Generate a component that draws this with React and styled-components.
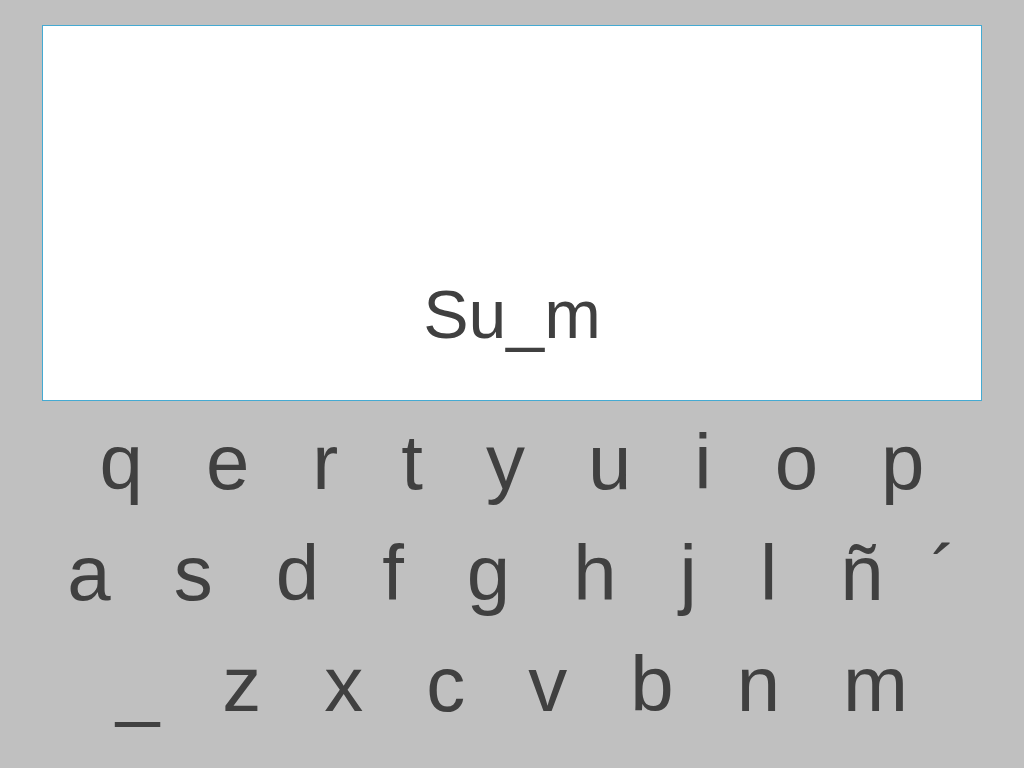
import styled, { createGlobalStyle } from 'styled-components';

const GlobalStyle = createGlobalStyle`
   html, body {
      margin: 0;
      padding: 0;
      background: #c0c0c0;
   }
   body {
      font-family: "Liberation Sans", Arial, sans-serif;
      color: #404040;
   }
`;

const Page = styled.div`
   width: 1024px;
   height: 768px;
   box-sizing: border-box;
   padding: 25px 42px 0;
   overflow: hidden;
`;

const Display = styled.div`
   height: 376px;
   box-sizing: border-box;
   background: #ffffff;
   border: 1.5px solid #45aad2;
   display: flex;
   align-items: flex-end;
   justify-content: center;
   padding-bottom: 52px;
`;

const Typed = styled.p`
   margin: 0;
   font-size: 68px;
   line-height: 68px;
   color: #404040;
`;

const Keyboard = styled.div`
   margin-top: 6px;
   margin-left: -42px;
   margin-right: -42px;
   display: flex;
   flex-direction: column;
`;

const Row = styled.div`
   display: flex;
   justify-content: center;
   gap: 63px;
   height: 111px;
`;

const Key = styled.span`
   font-size: 78px;
   line-height: 111px;
   color: #404040;
   user-select: none;
   margin-left: ${p => (p.$tight ? '-16px' : '0')};
`;

const rows = [
   ['q', 'e', 'r', 't', 'y', 'u', 'i', 'o', 'p'],
   ['a', 's', 'd', 'f', 'g', 'h', 'j', 'l', 'ñ', '´'],
   ['_', 'z', 'x', 'c', 'v', 'b', 'n', 'm'],
];

export default () => {
   return (
      <>
         <GlobalStyle />
         <Page>
            <Display>
               <Typed>Su_m</Typed>
            </Display>
            <Keyboard>
               {rows.map((row, i) => (
                  <Row key={i}>
                     {row.map(k => (
                        <Key key={k} $tight={k === '´'}>
                           {k}
                        </Key>
                     ))}
                  </Row>
               ))}
            </Keyboard>
         </Page>
      </>
   );
};
